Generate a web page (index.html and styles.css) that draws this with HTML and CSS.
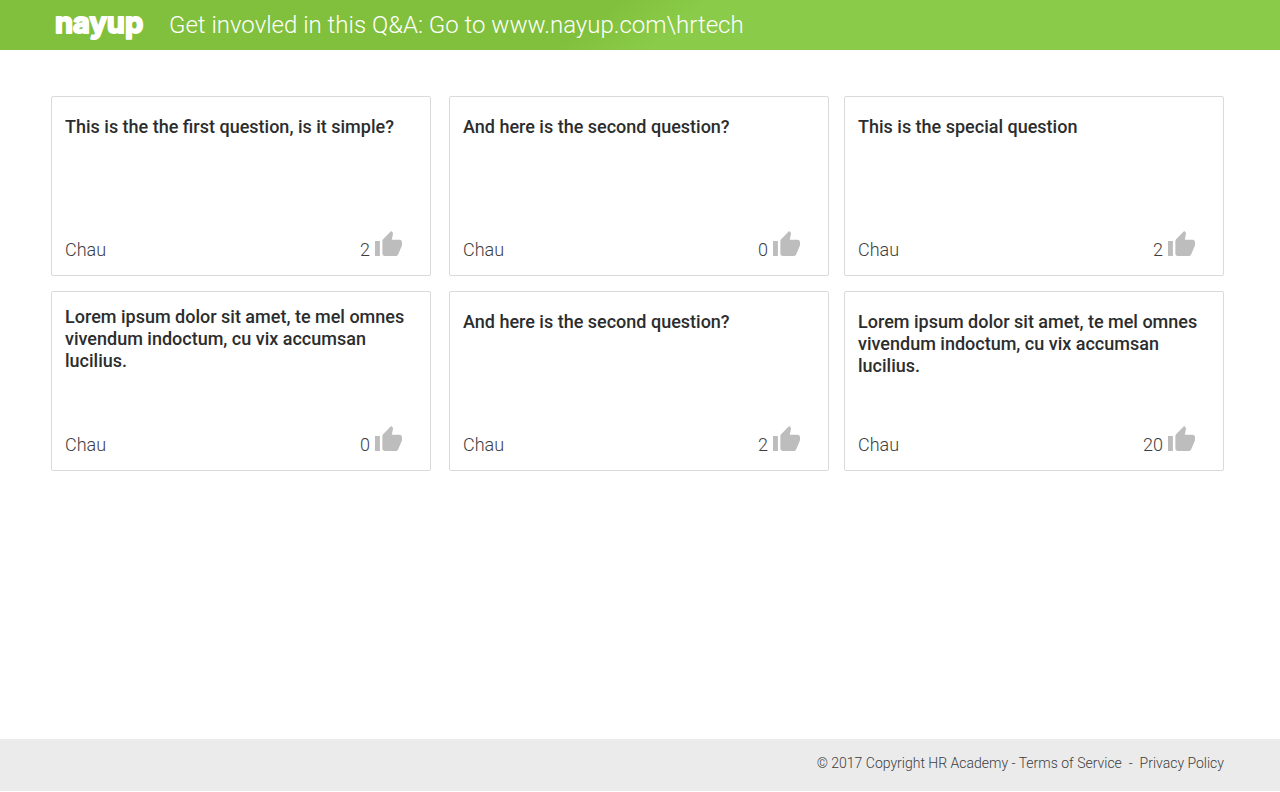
FILE: index.html
```html
<!DOCTYPE html>
<html lang="en">
<head>
<meta charset="utf-8">
<meta name="viewport" content="width=device-width, initial-scale=1">
<title>nayup Q&amp;A</title>
<link rel="stylesheet" href="styles.css">
</head>
<body>
<svg class="sprite" aria-hidden="true">
  <symbol id="thumb" viewBox="1 1 22 20" preserveAspectRatio="none">
    <path d="M1 21h4V9H1v12zm22-11c0-1.1-.9-2-2-2h-6.31l.95-4.57.03-.32c0-.41-.17-.79-.44-1.06L14.17 1 7.59 7.59C7.22 7.95 7 8.45 7 9v10c0 1.1.9 2 2 2h9c.83 0 1.54-.5 1.84-1.22l3.02-7.05c.09-.23.14-.47.14-.73v-2z"/>
  </symbol>
</svg>
<header class="header">
  <svg class="logo" viewBox="0 0 90 32"><text x="0" y="24">nayup</text></svg>
  <h1 class="tagline">Get invovled in this Q&amp;A: Go to www.nayup.com\hrtech</h1>
</header>
<main class="questions">
  <article class="card">
    <h2 class="question">This is the the first question, is it simple?</h2>
    <div class="meta"><span class="author">Chau</span><button class="like" type="button" aria-label="2 likes"><span>2</span><svg class="thumb"><use href="#thumb"/></svg></button></div>
  </article>
  <article class="card">
    <h2 class="question">And here is the second question?</h2>
    <div class="meta"><span class="author">Chau</span><button class="like" type="button" aria-label="0 likes"><span>0</span><svg class="thumb"><use href="#thumb"/></svg></button></div>
  </article>
  <article class="card">
    <h2 class="question">This is the special question</h2>
    <div class="meta"><span class="author">Chau</span><button class="like" type="button" aria-label="2 likes"><span>2</span><svg class="thumb"><use href="#thumb"/></svg></button></div>
  </article>
  <article class="card card-compact">
    <h2 class="question">Lorem ipsum dolor sit amet, te mel omnes vivendum indoctum, cu vix accumsan lucilius.</h2>
    <div class="meta"><span class="author">Chau</span><button class="like" type="button" aria-label="0 likes"><span>0</span><svg class="thumb"><use href="#thumb"/></svg></button></div>
  </article>
  <article class="card">
    <h2 class="question">And here is the second question?</h2>
    <div class="meta"><span class="author">Chau</span><button class="like" type="button" aria-label="2 likes"><span>2</span><svg class="thumb"><use href="#thumb"/></svg></button></div>
  </article>
  <article class="card">
    <h2 class="question">Lorem ipsum dolor sit amet, te mel omnes vivendum indoctum, cu vix accumsan lucilius.</h2>
    <div class="meta"><span class="author">Chau</span><button class="like" type="button" aria-label="20 likes"><span>20</span><svg class="thumb"><use href="#thumb"/></svg></button></div>
  </article>
</main>
<footer class="footer">
  <span>© 2017 Copyright HR Academy - </span><a href="#terms">Terms of Service</a><span>&nbsp; - &nbsp;</span><a href="#privacy">Privacy Policy</a>
</footer>
</body>
</html>
```
FILE: styles.css
```css
* { box-sizing: border-box; }

body {
  margin: 0;
  min-height: 100vh;
  display: flex;
  flex-direction: column;
  padding-bottom: 1px;
  background: #fff;
  color: #2c2d2e;
  font-family: Roboto, "Liberation Sans", sans-serif;
}

.sprite { display: none; }

.header {
  display: flex;
  align-items: center;
  gap: 24px;
  min-height: 50px;
  padding: 0 55px;
  background: linear-gradient(142deg, #81c03c 46%, #8acb49 53%);
  color: #fff;
}

.logo {
  flex: none;
  width: 90px;
  height: 32px;
  overflow: visible;
  font: 700 29px Inter, sans-serif;
  fill: #fff;
  stroke: #fff;
  stroke-width: 2px;
  stroke-linejoin: round;
}

.tagline {
  margin: 0;
  font-size: 24px;
  font-weight: 300;
  line-height: 28px;
}

.questions {
  flex: 1;
  display: grid;
  grid-template-columns: 383fr 380fr 380fr;
  align-content: start;
  gap: 15px;
  padding: 46px 56px 46px 51px;
}

.card {
  display: flex;
  flex-direction: column;
  justify-content: space-between;
  min-height: 180px;
  padding: 19px 28px 14px 13px;
  border: 1px solid #dadada;
  border-radius: 2px;
}

.card:nth-child(3n + 1) { margin-right: 3px; }

.card-compact { padding-top: 14px; }

.question {
  margin: 0 -10px 0 0;
  font-size: 18px;
  font-weight: 500;
  line-height: 22px;
}

.meta {
  display: flex;
  align-items: flex-end;
  justify-content: space-between;
  color: #3c3d3e;
  font-size: 18px;
  font-weight: 300;
  line-height: 22px;
}

.like {
  display: flex;
  align-items: flex-end;
  gap: 5px;
  padding: 0;
  border: 0;
  background: none;
  color: inherit;
  font: inherit;
  cursor: pointer;
}

.thumb {
  width: 27px;
  height: 25px;
  margin-bottom: 5px;
  fill: #bdbdbd;
}

.footer {
  min-height: 52px;
  padding: 14px 56px;
  background: #ebebeb;
  color: #3c3d3e;
  font-size: 14px;
  font-weight: 300;
  line-height: 20px;
  text-align: right;
}

.footer a {
  color: inherit;
  text-decoration: none;
}
```
